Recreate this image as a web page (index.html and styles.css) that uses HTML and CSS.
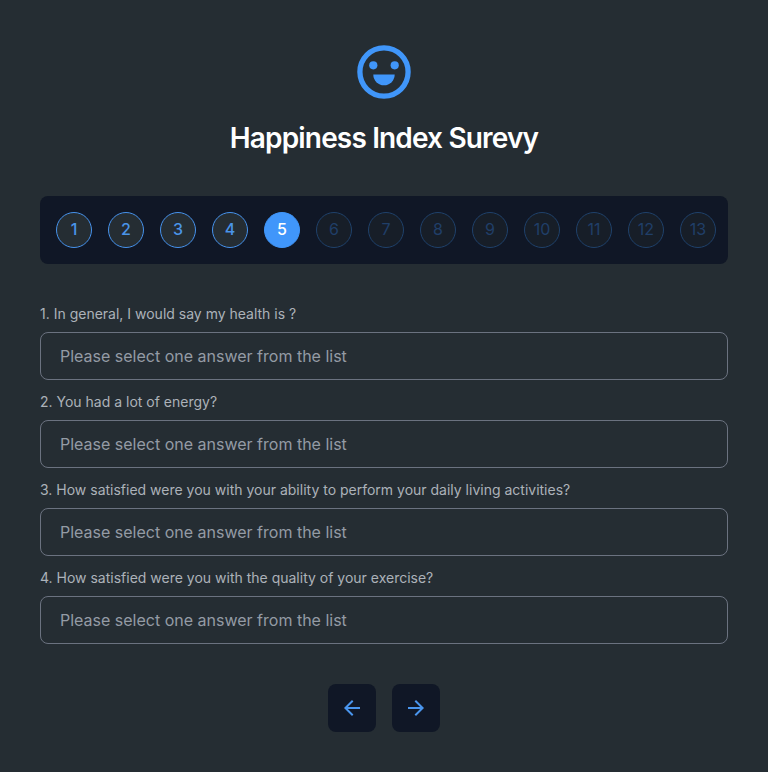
FILE: index.html
```html
<!DOCTYPE html>
<html lang="en">
<head>
<meta charset="utf-8">
<title>Happiness Index Surevy</title>
<link rel="stylesheet" href="styles.css">
</head>
<body>
<main class="survey">
  <header class="header">
    <svg class="logo" viewBox="0 0 64 64" aria-hidden="true">
      <circle cx="32" cy="32" r="24.1" fill="none" stroke="currentColor" stroke-width="5.3"/>
      <circle cx="21.3" cy="25.3" r="4.1" fill="currentColor"/>
      <circle cx="42.7" cy="25.3" r="4.1" fill="currentColor"/>
      <path d="M21.3 34.6h21.4a10.7 10.7 0 0 1-21.4 0z" fill="currentColor"/>
    </svg>
    <h1 class="title">Happiness Index Surevy</h1>
  </header>
  <ol class="steps">
    <li class="step step-done">1</li>
    <li class="step step-done">2</li>
    <li class="step step-done">3</li>
    <li class="step step-done">4</li>
    <li class="step step-current">5</li>
    <li class="step">6</li>
    <li class="step">7</li>
    <li class="step">8</li>
    <li class="step">9</li>
    <li class="step">10</li>
    <li class="step">11</li>
    <li class="step">12</li>
    <li class="step">13</li>
  </ol>
  <section class="questions">
    <div class="question">
      <div class="label">1. In general, I would say my health is ?</div>
      <div class="select">Please select one answer from the list</div>
    </div>
    <div class="question">
      <div class="label">2. You had a lot of energy?</div>
      <div class="select">Please select one answer from the list</div>
    </div>
    <div class="question">
      <div class="label">3. How satisfied were you with your ability to perform your daily living activities?</div>
      <div class="select">Please select one answer from the list</div>
    </div>
    <div class="question">
      <div class="label">4. How satisfied were you with the quality of your exercise?</div>
      <div class="select">Please select one answer from the list</div>
    </div>
  </section>
  <nav class="nav">
    <button class="nav-button" aria-label="Previous">
      <svg class="arrow" viewBox="0 0 24 24"><path d="M20 11H7.83l5.59-5.59L12 4l-8 8 8 8 1.41-1.41L7.83 13H20v-2z"/></svg>
    </button>
    <button class="nav-button" aria-label="Next">
      <svg class="arrow" viewBox="0 0 24 24"><path d="M12 4l-1.41 1.41L16.17 11H4v2h12.17l-5.58 5.59L12 20l8-8z"/></svg>
    </button>
  </nav>
</main>
</body>
</html>
```
FILE: styles.css
```css
* {
  box-sizing: border-box;
}

body {
  margin: 0;
  background: #252d33;
  font-family: Inter, sans-serif;
}

.survey {
  display: flex;
  flex-direction: column;
  gap: 40px;
  min-height: 772px;
  padding: 40px;
}

.header {
  display: flex;
  flex-direction: column;
  align-items: center;
  gap: 16px;
  color: #4096fa;
}

.logo {
  width: 64px;
  height: 64px;
}

.title {
  margin: 0;
  color: #fff;
  font-size: 28px;
  font-weight: 600;
  line-height: 36px;
  letter-spacing: -0.84px;
}

.steps {
  display: flex;
  justify-content: space-between;
  height: 68px;
  margin: 0;
  padding: 16px 12px 16px 16px;
  list-style: none;
  background: #101726;
  border-radius: 8px;
}

.step {
  display: flex;
  align-items: center;
  justify-content: center;
  width: 36px;
  height: 36px;
  padding-bottom: 2px;
  border: 1px solid #1f416b;
  border-radius: 50%;
  background: #171e28;
  color: #203f68;
  font-size: 16px;
}

.step-done {
  border-color: #4692ec;
  background: #252d33;
  color: #4a94e8;
  font-weight: 500;
}

.step-current {
  border-color: #4096fa;
  background: #4096fa;
  color: #fff;
  font-weight: 500;
}

.questions {
  display: flex;
  flex-direction: column;
  gap: 12px;
}

.question {
  display: flex;
  flex-direction: column;
  gap: 8px;
}

.label {
  color: #acb2b9;
  font-size: 14px;
  line-height: 20px;
}

.select {
  height: 48px;
  padding: 0 19px;
  border: 1px solid #6b7280;
  border-radius: 8px;
  color: #949ba5;
  font-size: 16px;
  line-height: 46px;
}

.nav {
  display: flex;
  justify-content: center;
  gap: 16px;
}

.nav-button {
  display: flex;
  align-items: center;
  justify-content: center;
  width: 48px;
  height: 48px;
  padding: 0;
  border: 0;
  border-radius: 8px;
  background: #101726;
}

.arrow {
  width: 24px;
  height: 24px;
  fill: #4a96ee;
}
```
